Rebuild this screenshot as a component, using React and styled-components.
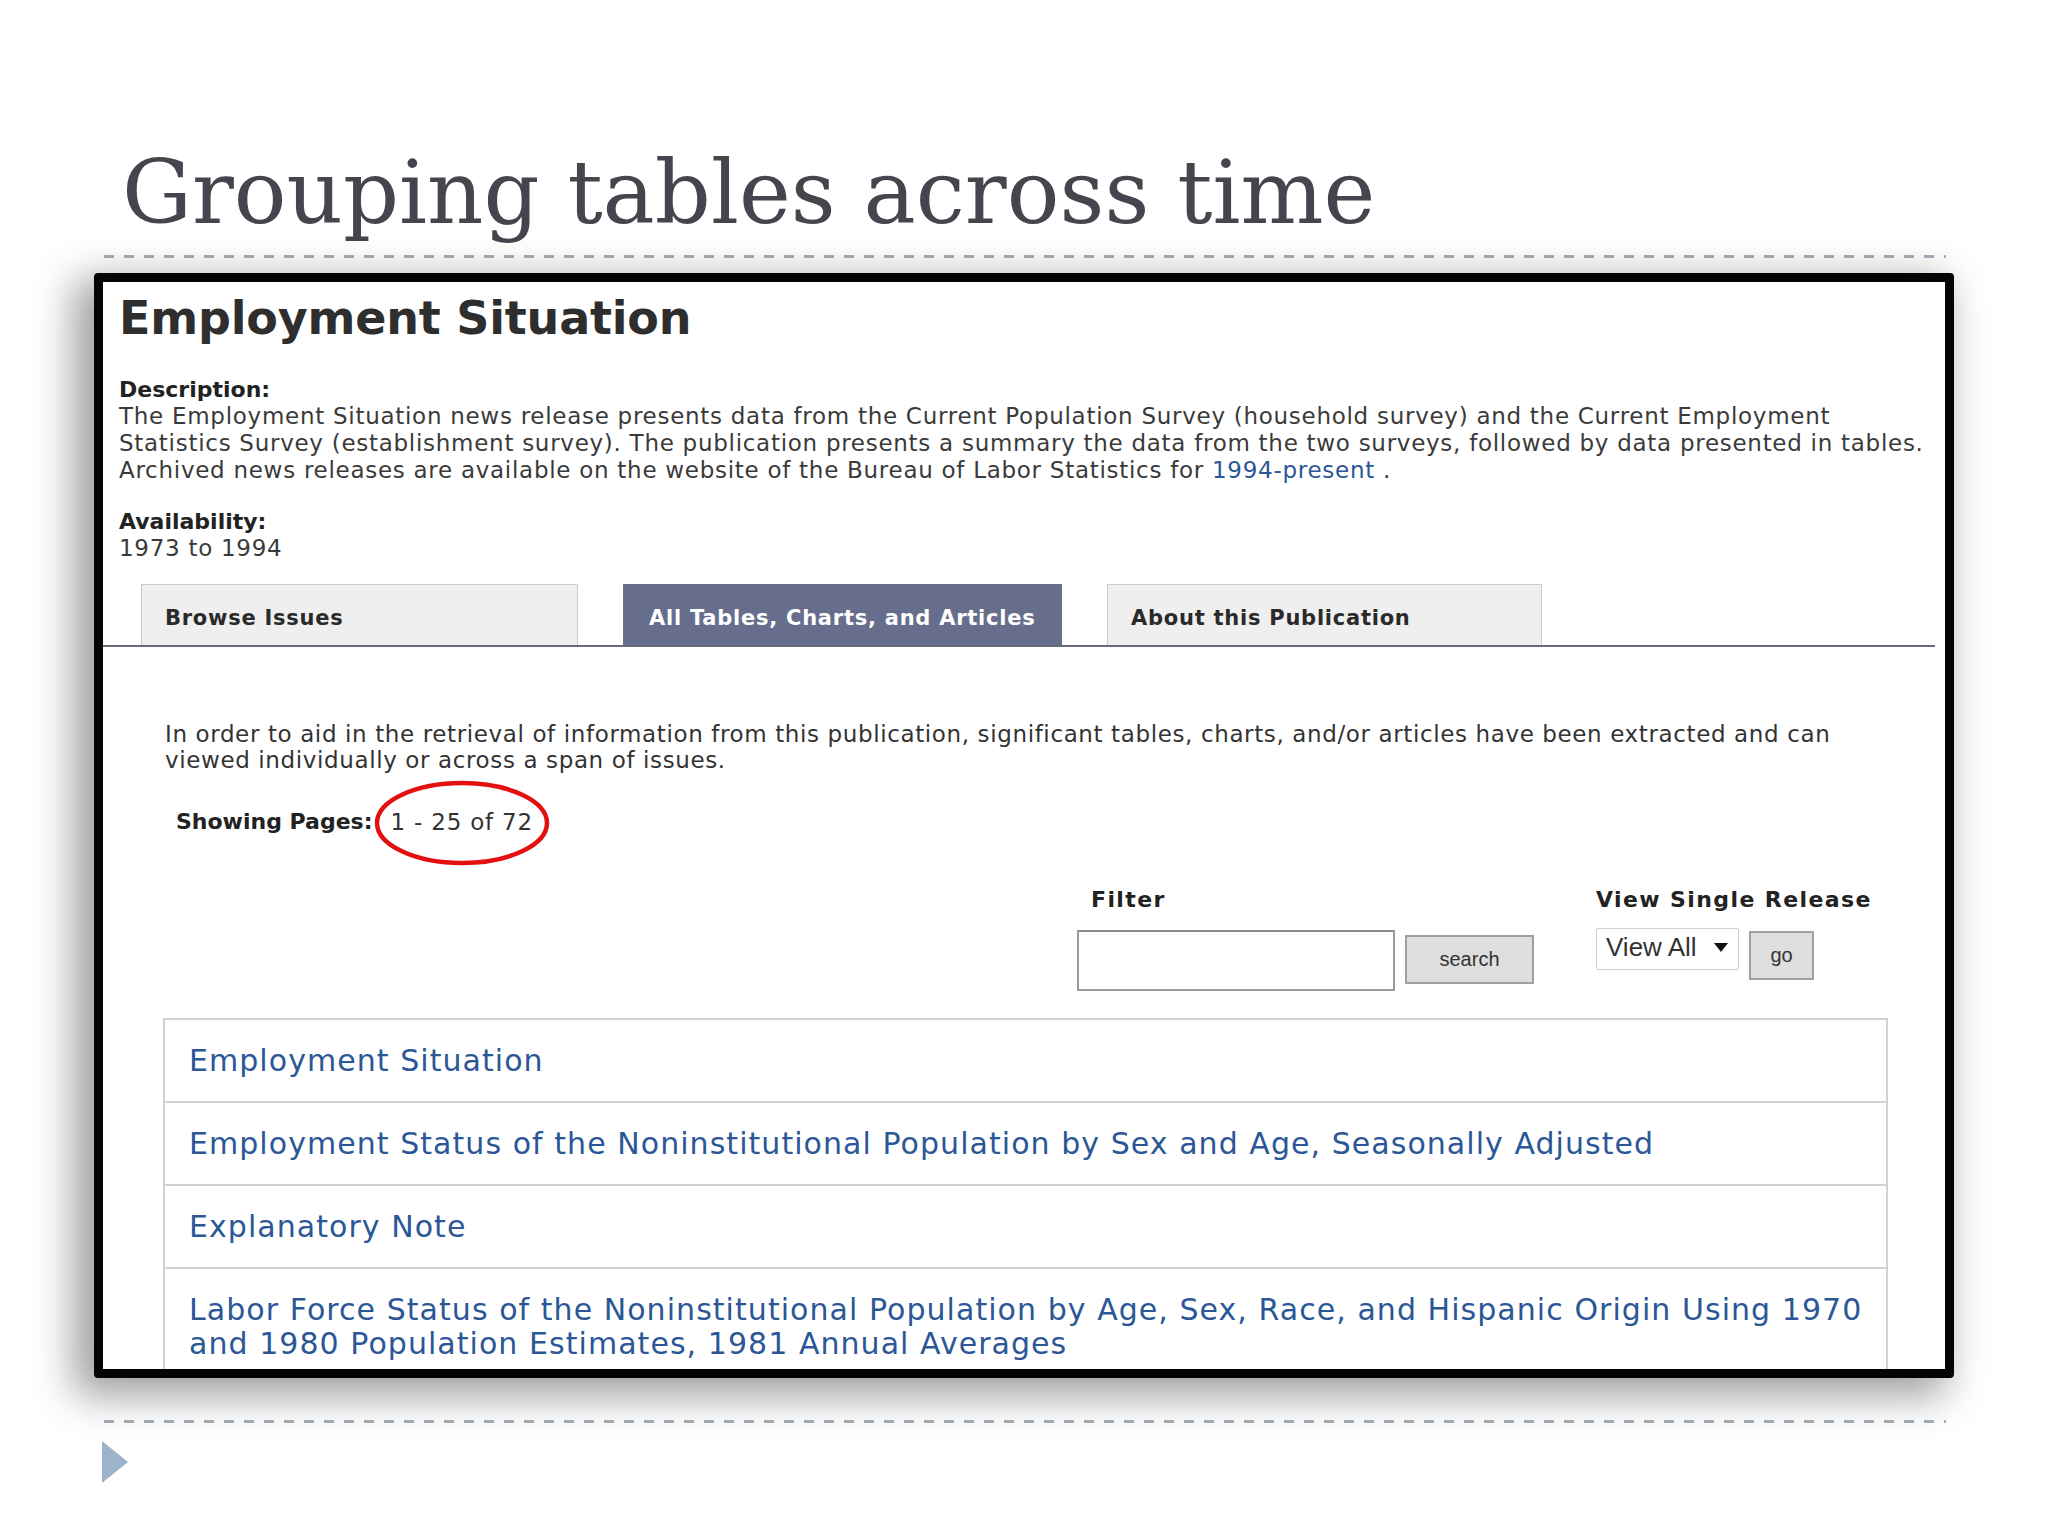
import React from "react"
import styled, { createGlobalStyle } from "styled-components"

const GlobalStyle = createGlobalStyle`
    html, body {
        margin: 0;
        padding: 0;
        background: #ffffff;
    }
`;

const sans = `"DejaVu Sans", Verdana, sans-serif`;

const tabs = [
    { label: "Browse Issues", width: 437 },
    { label: "All Tables, Charts, and Articles", width: 439, active: true },
    { label: "About this Publication", width: 435 },
];

const links = [
    ["Employment Situation"],
    ["Employment Status of the Noninstitutional Population by Sex and Age, Seasonally Adjusted"],
    ["Explanatory Note"],
    [
        "Labor Force Status of the Noninstitutional Population by Age, Sex, Race, and Hispanic Origin Using 1970",
        "and 1980 Population Estimates, 1981 Annual Averages",
    ],
];

const App = () => {
    return (
        <Slide>
            <GlobalStyle />
            <Title>Grouping tables across time</Title>
            <DashedRule />
            <Frame>
                <PageHeading>Employment Situation</PageHeading>
                <InfoBlock>
                    <InfoLabel>Description:</InfoLabel>
                    <InfoLine>The Employment Situation news release presents data from the Current Population Survey (household survey) and the Current Employment</InfoLine>
                    <InfoLine>Statistics Survey (establishment survey). The publication presents a summary the data from the two surveys, followed by data presented in tables.</InfoLine>
                    <InfoLine>Archived news releases are available on the website of the Bureau of Labor Statistics for <InlineLink>1994-present</InlineLink> .</InfoLine>
                </InfoBlock>
                <InfoBlock $gap={24}>
                    <InfoLabel>Availability:</InfoLabel>
                    <InfoLine>1973 to 1994</InfoLine>
                </InfoBlock>
                <TabBar>
                    {tabs.map((t) => (
                        <Tab key={t.label} $active={t.active} $width={t.width}>{t.label}</Tab>
                    ))}
                </TabBar>
                <Intro>
                    <div>In order to aid in the retrieval of information from this publication, significant tables, charts, and/or articles have been extracted and can</div>
                    <div>viewed individually or across a span of issues.</div>
                </Intro>
                <Showing>
                    <strong>Showing Pages:</strong>
                    <Count>
                        1 - 25 of 72
                        <Circle viewBox="0 0 176 86">
                            <ellipse cx="88" cy="43" rx="85" ry="40" fill="none" stroke="#e41010" strokeWidth="4.5" />
                        </Circle>
                    </Count>
                </Showing>
                <Controls>
                    <ControlGroup $left={974}>
                        <ControlLabel $indent={14}>Filter</ControlLabel>
                        <ControlRow>
                            <TextInput />
                            <GrayButton $width={129} $height={49} $top={7}>search</GrayButton>
                        </ControlRow>
                    </ControlGroup>
                    <ControlGroup $left={62}>
                        <ControlLabel $indent={0}>View Single Release</ControlLabel>
                        <ControlRow>
                            <Select>
                                View All
                                <svg width="14" height="9" viewBox="0 0 14 9"><path d="M0 0h14L7 9z" fill="#111" /></svg>
                            </Select>
                            <GrayButton $width={65} $height={49} $top={3}>go</GrayButton>
                        </ControlRow>
                    </ControlGroup>
                </Controls>
                <LinkList>
                    {links.map((lines) => (
                        <LinkRow key={lines[0]}>
                            {lines.map((l) => <div key={l}>{l}</div>)}
                        </LinkRow>
                    ))}
                </LinkList>
            </Frame>
            <DashedRule $top={42} />
            <Arrow />
        </Slide>
    )
}

const Slide = styled.div`
    width: 2048px;
    height: 1536px;
    overflow: hidden;
    background: #ffffff;
    padding-top: 150px;
    box-sizing: border-box;
`;

const Title = styled.h1`
    margin: 0 0 19px 122px;
    font-family: "DejaVu Serif", "Liberation Serif", serif;
    font-weight: normal;
    font-size: 87.6px;
    line-height: 86px;
    color: #45454e;
    white-space: nowrap;
`;

const DashedRule = styled.div`
    margin: ${p => p.$top || 0}px 0 0 104px;
    width: 1842px;
    height: 3px;
    background: repeating-linear-gradient(90deg, #a3afba 0 10px, transparent 10px 20px);
`;

const Frame = styled.div`
    margin: 15px 0 0 94px;
    width: 1860px;
    height: 1105px;
    box-sizing: border-box;
    border: 9px solid #050505;
    border-radius: 4px;
    background: #ffffff;
    overflow: hidden;
    box-shadow: -14px 12px 40px 6px rgba(0, 0, 0, 0.38);
    position: relative;
    z-index: 1;
    font-family: ${sans};
    color: #333333;
`;

const PageHeading = styled.h2`
    margin: 13px 0 0 16px;
    font-size: 46px;
    line-height: 46px;
    font-weight: bold;
    color: #2e2e2e;
    letter-spacing: -0.2px;
`;

const InfoBlock = styled.div`
    margin: ${p => p.$gap || 35}px 0 0 16px;
    font-size: 23px;
    line-height: 27px;
    white-space: nowrap;
`;

const InfoLabel = styled.div`
    font-size: 22px;
    font-weight: bold;
    color: #222;
`;

const InfoLine = styled.div`
    color: #3a3a3a;
    letter-spacing: 0.72px;
`;

const InlineLink = styled.span`
    color: #2b5797;
`;

const TabBar = styled.div`
    margin: 22px 10px 0 0;
    padding-left: 38px;
    display: flex;
    gap: 45px;
    border-bottom: 2px solid #666b7c;
`;

const Tab = styled.div`
    width: ${p => p.$width}px;
    height: 61px;
    box-sizing: border-box;
    padding: 18px 0 0 ${p => p.$active ? 25 : 23}px;
    font-size: 21px;
    line-height: 30px;
    font-weight: bold;
    white-space: nowrap;
    letter-spacing: 0.75px;
    background: ${p => p.$active ? "#676e8c" : "#efefef"};
    color: ${p => p.$active ? "#ffffff" : "#2a2a2a"};
    border: 1px solid ${p => p.$active ? "#676e8c" : "#cccccc"};
    border-bottom: none;
`;

const Intro = styled.div`
    margin: 74px 0 0 62px;
    font-size: 23px;
    line-height: 26px;
    letter-spacing: 0.62px;
    white-space: nowrap;
`;

const Showing = styled.div`
    margin: 36px 0 0 73px;
    font-size: 23px;
    line-height: 26px;
    display: flex;
    gap: 18px;
    strong {
        font-size: 22px;
        color: #222;
    }
`;

const Count = styled.span`
    position: relative;
    letter-spacing: 0.8px;
`;

const Circle = styled.svg`
    position: absolute;
    left: -17px;
    top: -29px;
    width: 176px;
    height: 86px;
    overflow: visible;
`;

const Controls = styled.div`
    margin-top: 52px;
    display: flex;
`;

const ControlGroup = styled.div`
    margin-left: ${p => p.$left}px;
    display: flex;
    flex-direction: column;
`;

const ControlLabel = styled.div`
    margin-left: ${p => p.$indent}px;
    font-size: 22px;
    line-height: 26px;
    font-weight: bold;
    letter-spacing: 1.4px;
    color: #222;
    white-space: nowrap;
`;

const ControlRow = styled.div`
    margin-top: 15px;
    display: flex;
    align-items: flex-start;
    gap: 10px;
`;

const TextInput = styled.div`
    width: 318px;
    height: 61px;
    box-sizing: border-box;
    border: 2px solid #9a9a9a;
    border-top-color: #888;
    margin-top: 2px;
    background: #fff;
`;

const GrayButton = styled.div`
    margin-top: ${p => p.$top}px;
    width: ${p => p.$width}px;
    height: ${p => p.$height}px;
    box-sizing: border-box;
    border: 2px solid #a0a0a0;
    background: #dedede;
    display: flex;
    align-items: center;
    justify-content: center;
    font-family: "Liberation Sans", Arial, sans-serif;
    font-size: 20px;
    color: #333;
`;

const Select = styled.div`
    width: 143px;
    height: 42px;
    box-sizing: border-box;
    border: 1px solid #cfcfcf;
    border-radius: 2px;
    background: #fff;
    display: flex;
    align-items: center;
    justify-content: space-between;
    padding: 0 10px 4px 9px;
    font-family: "Liberation Sans", Arial, sans-serif;
    font-size: 26px;
    color: #333;
`;

const LinkList = styled.div`
    margin: 27px 0 0 60px;
    width: 1725px;
    box-sizing: border-box;
    border: 2px solid #d2d2d2;
    border-top: none;
`;

const LinkRow = styled.div`
    border-top: 2px solid #d2d2d2;
    padding: 24px 24px 23px 24px;
    font-size: 30px;
    line-height: 34px;
    color: #2b5797;
    white-space: nowrap;
    letter-spacing: 1.05px;
`;

const Arrow = styled.div`
    margin: 18px 0 0 102px;
    width: 0;
    height: 0;
    border-top: 21px solid transparent;
    border-bottom: 21px solid transparent;
    border-left: 26px solid #9db3c9;
`;

export default App
